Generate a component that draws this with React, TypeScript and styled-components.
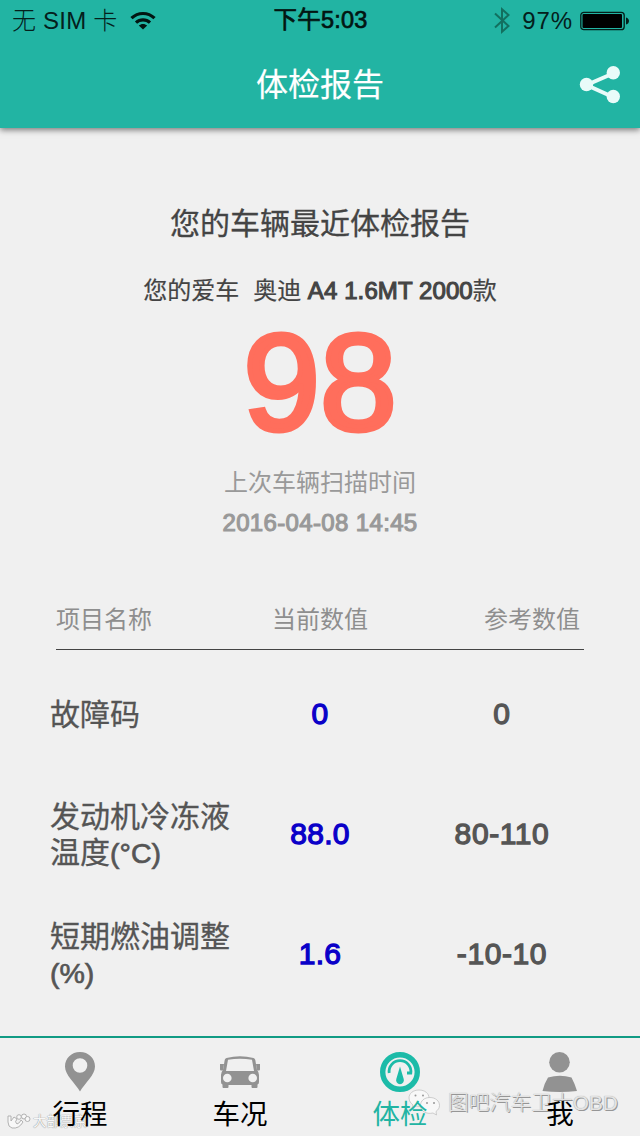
import React from "react";
import styled, { createGlobalStyle } from "styled-components";

const TEAL = "#22b4a3";

const GlobalStyle = createGlobalStyle`
  *, *::before, *::after { box-sizing: border-box; }
  body {
    margin: 0;
    background: #f0f0f0;
    font-family: "Liberation Sans", "Noto Sans CJK SC", sans-serif;
  }
`;

const Screen = styled.div`
  position: relative;
  width: 640px;
  height: 1136px;
  display: flex;
  flex-direction: column;
  overflow: hidden;
  background: #f0f0f0;
`;

const Header = styled.header`
  flex: none;
  height: 128px;
  background: ${TEAL};
  box-shadow: 0 2px 6px rgba(0, 0, 0, 0.5);
`;

const StatusBar = styled.div`
  display: grid;
  grid-template-columns: 1fr auto 1fr;
  align-items: center;
  height: 40px;
  padding: 1px 11px 0 12px;
  font-size: 24px;
  line-height: 39px;
  color: #04201c;
  white-space: nowrap;
`;

const Carrier = styled.div`
  display: flex;
  align-items: center;
  gap: 13px;
  font-weight: 300;
  letter-spacing: 0.2px;
`;

const Clock = styled.div`
  color: #021512;
  font-size: 23.5px;
  letter-spacing: 0.2px;
  -webkit-text-stroke: 0.7px #021512;
`;

const Power = styled.div`
  display: flex;
  align-items: center;
  justify-content: flex-end;
`;

const Percent = styled.span`
  margin: 0 7px 0 12px;
  letter-spacing: 0.9px;
`;

const TitleBar = styled.div`
  display: grid;
  grid-template-columns: 1fr auto 1fr;
  align-items: center;
  height: 88px;
  padding: 0 19px;
`;

const Title = styled.h1`
  grid-column: 2;
  margin: 0;
  padding-top: 1px;
  font-size: 32px;
  font-weight: 400;
  line-height: 88px;
  color: #fff;
  -webkit-text-stroke: 0.2px #fff;
`;

const ShareButton = styled.button`
  justify-self: end;
  display: flex;
  padding: 0;
  border: 0;
  background: none;
`;

const Report = styled.main`
  flex: 1;
  min-height: 0;
  text-align: center;
`;

const Heading = styled.h2`
  margin: 76px 0 0;
  font-size: 30px;
  font-weight: 400;
  line-height: 40px;
  color: #444;
  -webkit-text-stroke: 0.3px #444;
`;

const Car = styled.p`
  display: flex;
  justify-content: center;
  gap: 14px;
  margin: 31px 0 0;
  font-size: 24px;
  line-height: 32px;
  color: #444;
  white-space: nowrap;
  -webkit-text-stroke: 0.2px #444;
`;

const Model = styled.span`
  b {
    font-size: 24px;
    letter-spacing: 0.1px;
    font-weight: 400;
    -webkit-text-stroke: 1.1px #444;
  }
`;

const Score = styled.div`
  height: 140px;
  margin-top: 5px;
  font-size: 138px;
  font-weight: 400;
  line-height: 140px;
  color: #ff6e5c;
  -webkit-text-stroke: 5px #ff6e5c;
`;

const ScanLabel = styled.p`
  margin: 15px 0 0;
  font-size: 24px;
  line-height: 32px;
  color: #999;
`;

const ScanTime = styled.p`
  margin: 8px 0 0;
  font-size: 24px;
  line-height: 32px;
  letter-spacing: 0.35px;
  color: #999;
  -webkit-text-stroke: 1.1px #999;
`;

const ColumnHeads = styled.div`
  display: grid;
  grid-template-columns: 1fr auto 1fr;
  height: 56px;
  margin: 55px 56px 0;
  padding: 9px 4px 0 0;
  border-bottom: 1px solid #444;
  font-size: 24px;
  line-height: 34px;
  color: #8e8e8e;
  span:first-child { text-align: left; }
  span:nth-child(2) { padding-left: 4px; }
  span:last-child { text-align: right; }
`;

const Row = styled.div`
  display: grid;
  grid-template-columns: 190px 160px 204px;
  align-items: center;
  height: 120px;
  margin-left: 50px;
  font-size: 30px;
  line-height: 36px;
  color: #555;
  &:first-of-type { margin-top: 5px; }
`;

const Name = styled.div`
  text-align: left;
  white-space: pre-line;
  -webkit-text-stroke: 0.3px #555;
`;

const Unit = styled.span`
  font-size: 28.5px;
  line-height: 1;
  -webkit-text-stroke: 0.7px #555;
`;

const Value = styled.div<{ $current?: boolean }>`
  padding-bottom: 2px;
  font-size: 30px;
  letter-spacing: ${(p) => (p.$current ? "0.3px" : "0.6px")};
  color: ${(p) => (p.$current ? "#0a00c8" : "#555")};
  -webkit-text-stroke: 1.3px currentColor;
`;

const TabBar = styled.nav`
  flex: none;
  display: grid;
  grid-template-columns: repeat(4, 1fr);
  height: 100px;
  border-top: 2px solid #119b84;
`;

const Tab = styled.div<{ $active?: boolean }>`
  display: flex;
  flex-direction: column;
  align-items: center;
  padding-top: 12px;
  font-size: 27.5px;
  line-height: 36px;
  color: ${(p) => (p.$active ? TEAL : "#000")};
  svg { margin-bottom: 3px; }
`;

const TabLabel = styled.span`
  position: relative;
  z-index: 1;
`;

const AccountMark = styled.div`
  position: absolute;
  z-index: 0;
  left: 408px;
  top: 1086px;
  display: flex;
  align-items: center;
  gap: 8px;
  font-size: 20.8px;
  font-weight: 300;
  line-height: 34px;
  color: #e4e4e4;
  white-space: nowrap;
  text-shadow: 1px 1px 0 #969696, 0 0 1px #999;
`;

const SourceMark = styled.div`
  position: absolute;
  left: 7px;
  top: 1111px;
  display: flex;
  align-items: center;
  gap: 2px;
  font-size: 13.5px;
  line-height: 22px;
  color: #f7f7f7;
  white-space: nowrap;
  text-shadow: 0 0 1px #999, 0 0 1px #999;
`;

const WifiIcon = () => (
  <svg width="26" height="20" viewBox="0 0 26 20" fill="none" stroke="#021512" strokeWidth="3.2">
    <path d="M1.500 7.200C8 .9 18 .9 24.500 7.200" />
    <path d="M6 11.700C10 8 16 8 20 11.700" />
    <path d="M13 18.500L8.800 14.600C11.200 12.500 14.800 12.500 17.200 14.600Z" fill="#021512" stroke="none" />
  </svg>
);

const BluetoothIcon = () => (
  <svg width="16" height="27" viewBox="0 0 16 27" fill="none" stroke="#12705f" strokeWidth="2">
    <path d="M1 6.500L14.500 19L8 24.700V2.300L14.500 8L1 20.500" />
  </svg>
);

const BatteryIcon = () => (
  <svg width="49" height="20" viewBox="0 0 49 20">
    <rect x=".8" y="1.300" width="43.400" height="17.400" rx="3" fill="none" stroke="#03201b" strokeWidth="1.300" />
    <rect x="2.500" y="3" width="39.500" height="14" rx="1" fill="#000" />
    <path d="M46 6.500C50 7.500 50 12.500 46 13.500Z" fill="#03201b" />
  </svg>
);

const ShareIcon = () => (
  <svg width="42" height="38" viewBox="0 0 42 38" fill="#e9fbf9">
    <path d="M34 7.500L7.500 19L34 31" fill="none" stroke="#e9fbf9" strokeWidth="4" />
    <circle cx="7.500" cy="18.500" r="6.700" />
    <circle cx="34.300" cy="6.800" r="6.700" />
    <circle cx="34.300" cy="30.500" r="6.700" />
  </svg>
);

const PinIcon = () => (
  <svg width="40" height="44" viewBox="0 0 40 44">
    <path
      fill="#929292"
      fillRule="evenodd"
      d="M20 2C11.500 2 5 8.300 5 16.500C5 25 15 33 20 41.500C25 33 35 25 35 16.500C35 8.300 28.500 2 20 2ZM20 8.200a7.300 7.300 0 1 1 0 14.600a7.300 7.300 0 1 1 0-14.600Z"
    />
  </svg>
);

const CarIcon = () => (
  <svg width="42" height="44" viewBox="0 0 42 44" fill="#929292">
    <path
      fillRule="evenodd"
      d="M7.500 8Q21 4.500 34.500 8Q36 8.500 36.300 10L38 20Q40 22 40 25V32Q40 34 38.500 34.500V37Q38.500 38 37.500 38H33.500Q32.500 38 32.500 37V35H9.500V37Q9.500 38 8.500 38H4.500Q3.500 38 3.500 37V34.500Q2 34 2 32V25Q2 22 4 20L5.700 10Q6 8.500 7.500 8ZM9 9.800Q21 7.500 33 9.800L35 21H7Z"
    />
    <path d="M1 14H5L4 20.500H2Q1 20.500 1 19.500ZM41 14H37L38 20.500H40Q41 20.500 41 19.500Z" />
    <circle cx="8.300" cy="28" r="4.300" fill="#f0f0f0" />
    <circle cx="33.700" cy="28" r="4.300" fill="#f0f0f0" />
  </svg>
);

const GaugeIcon = () => (
  <svg width="40" height="44" viewBox="0 0 40 44">
    <circle cx="20" cy="22" r="17.300" fill="none" stroke="#1cbba8" strokeWidth="5.400" />
    <path d="M9.200 23A10.900 10.900 0 1 1 30.800 23H27" fill="none" stroke="#1cbba8" strokeWidth="2.800" />
    <path d="M20 16.500L23.700 29A3.900 3.900 0 1 1 16.300 29Z" fill="#1cbba8" />
  </svg>
);

const PersonIcon = () => (
  <svg width="40" height="44" viewBox="0 0 40 44" fill="#929292">
    <circle cx="19.500" cy="12.300" r="10.300" />
    <path d="M8 27.500Q20 24 31.500 27.500Q34.500 33 37 41Q20 42.800 2.500 41Q4.500 33 8 27.500Z" />
  </svg>
);

const ChatIcon = () => (
  <svg width="32" height="28" viewBox="0 0 32 28" fill="#f8f8f8" stroke="#bbb" strokeWidth=".7">
    <path d="M11 1C5 1 1 4.500 1 9C1 12 3 14.500 5 16L4 19L8 17C15 18.500 21 15 21 9C21 4.500 17 1 11 1Z" />
    <path d="M22 8.500C16 8.500 12.500 12 12.500 16.500C12.500 22 18 25.500 25 24L28.500 26L28 22.500C30 21 31.500 19 31.500 16.500C31.500 12 27.500 8.500 22 8.500Z" />
    <g fill="#999" stroke="none">
      <circle cx="7.500" cy="6.500" r="1" />
      <circle cx="15" cy="6.500" r="1" />
      <circle cx="19" cy="14" r="1" />
      <circle cx="26" cy="14" r="1" />
    </g>
  </svg>
);

const PawIcon = () => (
  <svg width="24" height="18" viewBox="0 0 24 18" fill="#f8f8f8" stroke="#aaa" strokeWidth=".9">
    <path d="M1 3H4V8L7 4L10 6Q7 9 10 11Q13 10 14 7L16 9Q12 16 5 15Q1 14 1 9Z" />
    <circle cx="12" cy="4" r="2.300" />
    <circle cx="17" cy="3.500" r="2.500" />
    <circle cx="20.500" cy="6" r="2.500" />
  </svg>
);

const rows = [
  { name: "故障码", unit: "", current: "0", reference: "0" },
  { name: "发动机冷冻液\n温度", unit: "(°C)", current: "88.0", reference: "80-110" },
  { name: "短期燃油调整\n", unit: "(%)", current: "1.6", reference: "-10-10" },
];

const tabs = [
  { label: "行程", Icon: PinIcon },
  { label: "车况", Icon: CarIcon },
  { label: "体检", Icon: GaugeIcon, active: true },
  { label: "我", Icon: PersonIcon },
];

export default function App() {
  return (
    <>
      <GlobalStyle />
      <Screen>
        <Header>
          <StatusBar>
            <Carrier>
              <span>无 SIM 卡</span>
              <WifiIcon />
            </Carrier>
            <Clock>下午5:03</Clock>
            <Power>
              <BluetoothIcon />
              <Percent>97%</Percent>
              <BatteryIcon />
            </Power>
          </StatusBar>
          <TitleBar>
            <Title>体检报告</Title>
            <ShareButton aria-label="分享">
              <ShareIcon />
            </ShareButton>
          </TitleBar>
        </Header>
        <Report>
          <Heading>您的车辆最近体检报告</Heading>
          <Car>
            <span>您的爱车</span>
            <Model>
              奥迪 <b>A4 1.6MT 2000</b>款
            </Model>
          </Car>
          <Score>98</Score>
          <ScanLabel>上次车辆扫描时间</ScanLabel>
          <ScanTime>2016-04-08 14:45</ScanTime>
          <ColumnHeads>
            <span>项目名称</span>
            <span>当前数值</span>
            <span>参考数值</span>
          </ColumnHeads>
          <section>
            {rows.map((r) => (
              <Row key={r.name}>
                <Name>
                  {r.name}
                  {r.unit && <Unit>{r.unit}</Unit>}
                </Name>
                <Value $current>{r.current}</Value>
                <Value>{r.reference}</Value>
              </Row>
            ))}
          </section>
        </Report>
        <TabBar>
          {tabs.map(({ label, Icon, active }) => (
            <Tab key={label} $active={active}>
              <Icon />
              <TabLabel>{label}</TabLabel>
            </Tab>
          ))}
        </TabBar>
        <AccountMark>
          <ChatIcon />
          图吧汽车卫士OBD
        </AccountMark>
        <SourceMark>
          <PawIcon />
          大部票京
        </SourceMark>
      </Screen>
    </>
  );
}
